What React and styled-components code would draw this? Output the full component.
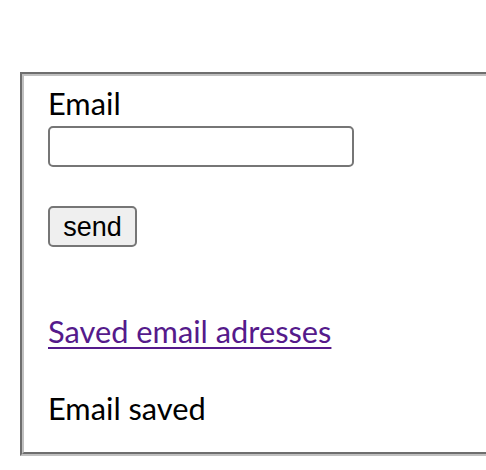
import React from "react";
import styled, { createGlobalStyle } from "styled-components";

const GlobalStyle = createGlobalStyle`
  html, body { margin: 0; padding: 0; overflow: hidden; background: #ffffff; }
  body { font-family: Lato, "Noto Sans", sans-serif; color: #000000; }
`;

const Page = styled.div`
  padding: 72px 0 0 20px;
  overflow: hidden;
`;

const Fieldset = styled.div`
  margin-right: -24px;
  border-style: solid;
  border-width: 2px;
  border-color: #6e6e6e #c0c0c0 #c0c0c0 #6e6e6e;
`;

const FieldsetInner = styled.div`
  border-style: solid;
  border-width: 2px;
  border-color: #c0c0c0 #6e6e6e #6e6e6e #c0c0c0;
  padding: 8.5px 24px 25.5px 24px;
  display: flex;
  flex-direction: column;
  align-items: flex-start;
`;

const Text = styled.div`
  font-family: Lato, "Noto Sans", sans-serif;
  font-size: 30.8px;
  line-height: 37px;
  margin-top: ${(p) => p.$gap || 0}px;
`;

const Input = styled.input`
  box-sizing: border-box;
  margin: 4.5px 0 0 0;
  width: 306px;
  height: 41px;
  border: 2px solid #767676;
  border-radius: 5px;
  background: #ffffff;
  padding: 2px 4px;
  font-family: "Liberation Sans", Arial, sans-serif;
  font-size: 26.67px;
  outline: none;
`;

const Button = styled.button`
  box-sizing: border-box;
  margin: 39px 0 0 0;
  width: 89px;
  height: 41px;
  border: 2px solid #767676;
  border-radius: 5px;
  background: #efefef;
  padding: 1px 12px 0;
  font-family: "Liberation Sans", Arial, sans-serif;
  font-size: 27px;
  color: #000000;
  line-height: 1;
`;

const Link = styled.a`
  color: #551a8b;
  text-decoration: underline;
  text-decoration-thickness: 2px;
  text-underline-offset: 4px;
`;

export default function App() {
  return (
    <>
      <GlobalStyle />
      <Page>
        <Fieldset>
          <FieldsetInner>
            <Text as="label" htmlFor="email">Email</Text>
            <Input id="email" type="text" />
            <Button type="button">send</Button>
            <Text $gap={65.5}>
              <Link href="#saved">Saved email adresses</Link>
            </Text>
            <Text $gap={40}>Email saved</Text>
          </FieldsetInner>
        </Fieldset>
      </Page>
    </>
  );
}
